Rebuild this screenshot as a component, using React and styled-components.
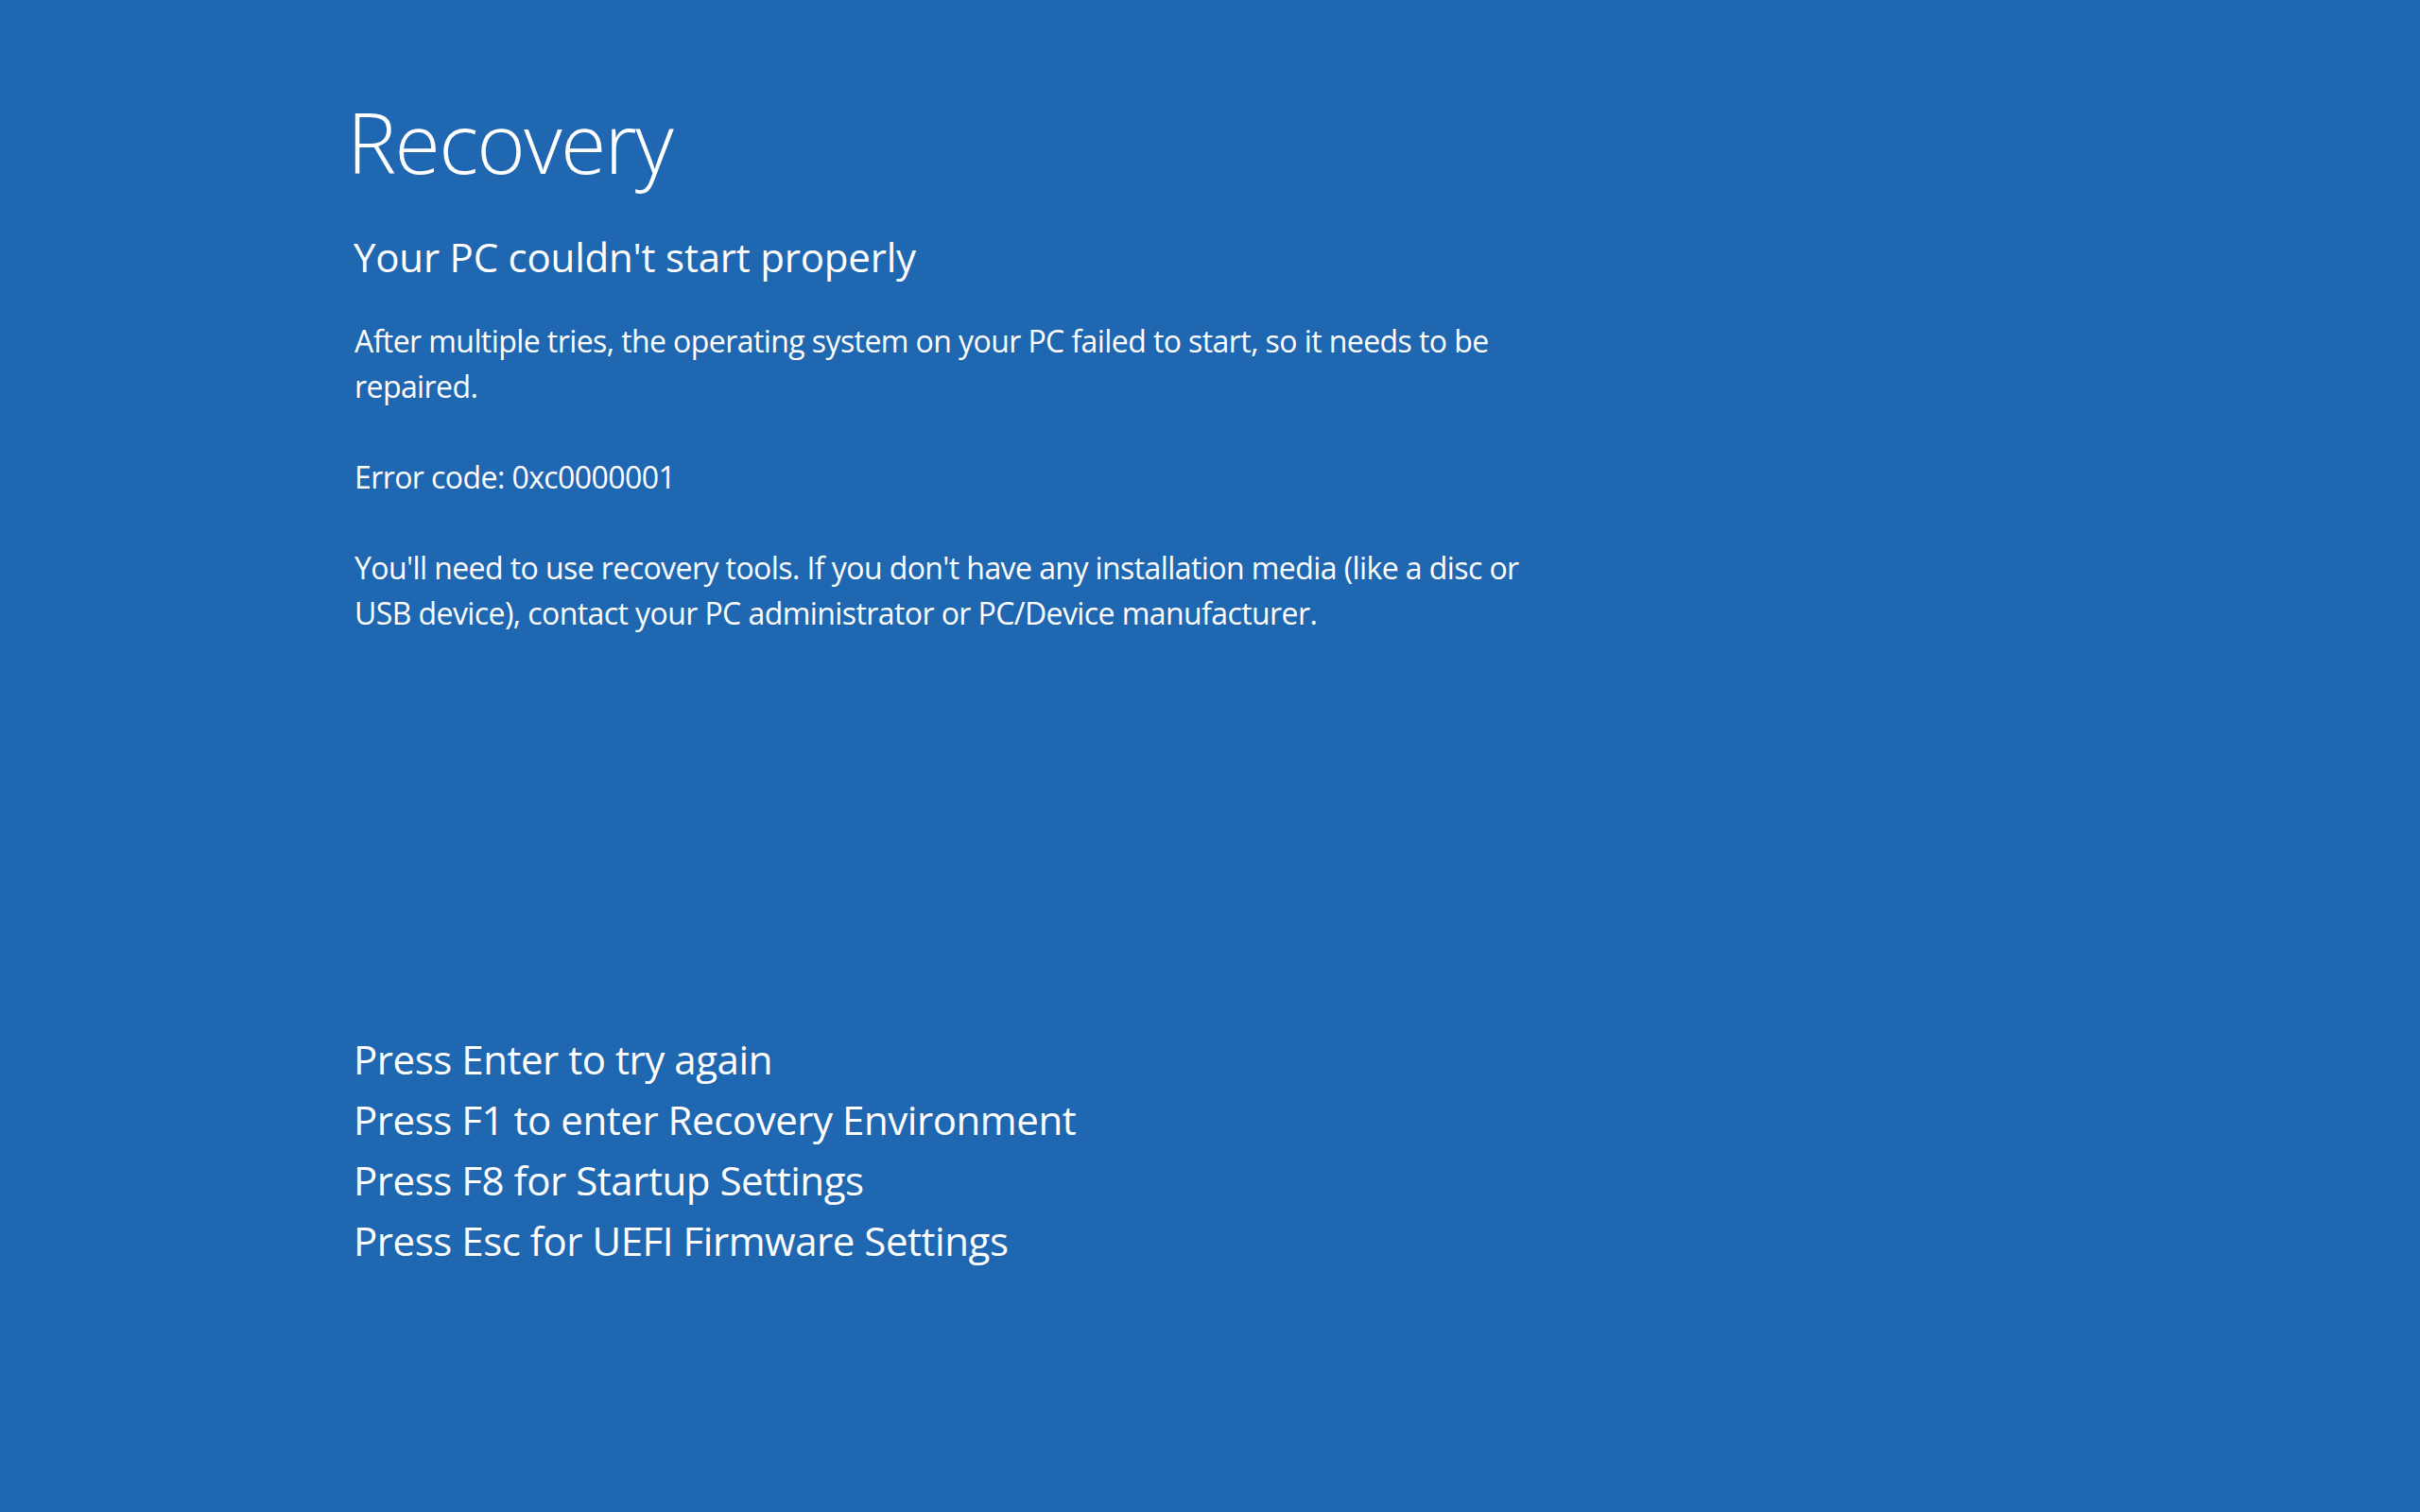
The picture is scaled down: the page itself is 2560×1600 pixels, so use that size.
import React from 'react';
import styled, { createGlobalStyle } from 'styled-components';

const GlobalStyle = createGlobalStyle`
html, body {
	margin: 0;
	padding: 0;
	background: #2067b1;
}
body {
	font-family: "Open Sans", "Noto Sans", "Liberation Sans", sans-serif;
	color: #ffffff;
}
`;

const Screen = styled.div`
width: 100vw;
height: 100vh;
background: #2067b1;
box-sizing: border-box;
padding: 105px 0 0 367px;
display: flex;
flex-direction: column;
`;

const Title = styled.h1`
margin: 0;
font-size: 88px;
font-weight: 300;
line-height: 90px;
letter-spacing: -1.7px;
`;

const Subtitle = styled.h2`
margin: 53px 0 0 7px;
font-size: 42px;
font-weight: 400;
line-height: 48px;
letter-spacing: -0.2px;
`;

const Body = styled.div`
margin: 41px 0 0 8px;
max-width: 1260px;
font-size: 32px;
line-height: 48px;
letter-spacing: -0.58px;
`;

const Paragraph = styled.p`
margin: 0 0 48px;
&:last-child {
	margin-bottom: 0;
}
`;

const Options = styled.div`
margin: 416px 0 0 7px;
display: flex;
flex-direction: column;
`;

const Option = styled.div`
font-size: 42px;
line-height: 64px;
letter-spacing: -0.45px;
`;

const options = [
	'Press Enter to try again',
	'Press F1 to enter Recovery Environment',
	'Press F8 for Startup Settings',
	'Press Esc for UEFI Firmware Settings',
];

const App = () => {
	return (
		<>
			<GlobalStyle />
			<Screen>
				<Title>Recovery</Title>
				<Subtitle>Your PC couldn't start properly</Subtitle>
				<Body>
					<Paragraph>
						After multiple tries, the operating system on your PC failed to start, so it needs to be repaired.
					</Paragraph>
					<Paragraph>Error code: 0xc0000001</Paragraph>
					<Paragraph>
						You'll need to use recovery tools. If you don't have any installation media (like a disc or USB device), contact your PC administrator or PC/Device manufacturer.
					</Paragraph>
				</Body>
				<Options>
					{options.map((text) => (
						<Option key={text}>{text}</Option>
					))}
				</Options>
			</Screen>
		</>
	);
};

export default App;
